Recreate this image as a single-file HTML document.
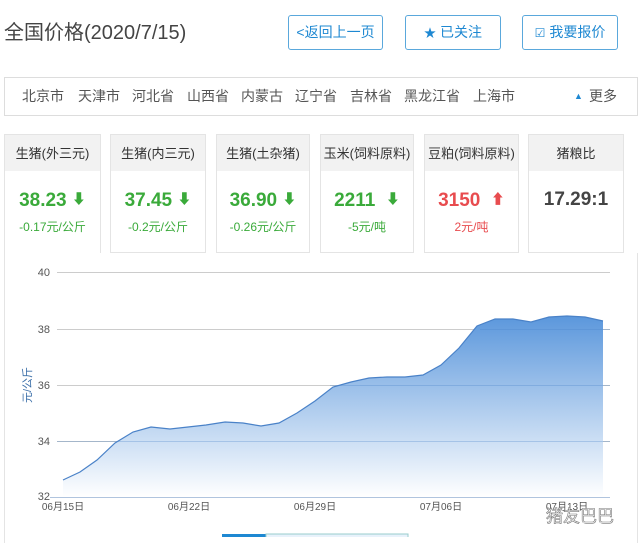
<!DOCTYPE html>
<html><head><meta charset="utf-8"><style>
*{margin:0;padding:0;box-sizing:border-box}
body{width:640px;height:537px;background:#fff;font-family:"Liberation Sans","Noto Sans CJK SC",sans-serif;position:relative;overflow:hidden;color:#333}
.abs{position:absolute}
.title{left:4px;top:16px;font-size:20px;color:#444}
.btn{top:15px;height:35px;border:1px solid #5aa8dc;border-radius:3px;color:#1e88d2;font-size:14px;line-height:33px;text-align:center}
.prov{left:4px;top:77px;width:634px;height:39px;border:1px solid #ddd;font-size:14px;color:#555;line-height:37px}
.prov span{position:absolute;top:0}
.card{top:134px;height:119px;border:1px solid #e4e4e4;text-align:center}
.card .h{height:36px;background:#f2f2f2;font-size:13px;line-height:38px;color:#333}
.card .v{font-size:19px;font-weight:bold;margin-top:18px}
.card .v i{font-style:normal;font-size:14px;vertical-align:2px}
.card .d{font-size:12px;margin-top:6px}
.g{color:#3aaa3a}.r{color:#e84c4f}
</style></head><body>
<div class="abs title">全国价格(2020/7/15)</div>
<div class="abs btn" style="left:288px;width:95px">&lt;返回上一页</div>
<div class="abs btn" style="left:405px;width:96px"><span style="font-size:12px">★</span> 已关注</div>
<div class="abs btn" style="left:522px;width:96px"><span style="font-size:12px">☑</span> 我要报价</div>
<div class="abs prov">
<span style="left:17px">北京市</span><span style="left:73px">天津市</span><span style="left:127px">河北省</span><span style="left:182px">山西省</span><span style="left:236px">内蒙古</span><span style="left:290px">辽宁省</span><span style="left:345px">吉林省</span><span style="left:399px">黑龙江省</span><span style="left:468px">上海市</span><span style="left:569px;font-size:9px;color:#1e88d2">▲</span><span style="left:584px">更多</span>
</div>
<div class="abs card" style="left:4px;width:97px;border-bottom:none"><div class="h">生猪(外三元)</div><div class="v g">38.23 <i>⬇</i></div><div class="d g">-0.17元/公斤</div></div>
<div class="abs card" style="left:110px;width:96px"><div class="h">生猪(内三元)</div><div class="v g">37.45 <i>⬇</i></div><div class="d g">-0.2元/公斤</div></div>
<div class="abs card" style="left:216px;width:94px"><div class="h">生猪(土杂猪)</div><div class="v g">36.90 <i>⬇</i></div><div class="d g">-0.26元/公斤</div></div>
<div class="abs card" style="left:320px;width:94px"><div class="h">玉米(饲料原料)</div><div class="v g">2211 &nbsp;<i>⬇</i></div><div class="d g">-5元/吨</div></div>
<div class="abs card" style="left:424px;width:95px"><div class="h">豆粕(饲料原料)</div><div class="v r">3150 &nbsp;<i>⬆</i></div><div class="d r">2元/吨</div></div>
<div class="abs card" style="left:528px;width:96px"><div class="h">猪粮比</div><div class="v" style="color:#444">17.29:1</div></div>
<div class="abs" style="left:4px;top:253px;width:634px;height:290px;border:1px solid #e4e4e4;border-bottom:none;border-top:none"></div>
<svg class="abs" style="left:0;top:0" width="640" height="537">
<defs><linearGradient id="gr" x1="0" y1="0" x2="0" y2="1"><stop offset="0" stop-color="#5b97dc"/><stop offset="1" stop-color="#fff"/></linearGradient></defs>
<g stroke="#ccc" stroke-width="1"><line x1="57" y1="272.5" x2="610" y2="272.5"/><line x1="57" y1="329.5" x2="610" y2="329.5"/><line x1="57" y1="385.5" x2="610" y2="385.5"/><line x1="57" y1="441.5" x2="610" y2="441.5"/></g>
<path d="M63,480 L80,472 L97,460 L115,443 L133,432 L151,427 L170,429 L188,427 L206,425 L225,422 L243,423 L261,426 L279,423 L297,413 L315,401 L333,387 L351,382 L369,378 L387,377 L405,377 L423,375 L441,365 L459,348 L477,326 L495,319 L513,319 L531,322 L549,317 L567,316 L585,317 L603,321 L603,497 L63,497Z" fill="url(#gr)"/>
<path d="M63,480 L80,472 L97,460 L115,443 L133,432 L151,427 L170,429 L188,427 L206,425 L225,422 L243,423 L261,426 L279,423 L297,413 L315,401 L333,387 L351,382 L369,378 L387,377 L405,377 L423,375 L441,365 L459,348 L477,326 L495,319 L513,319 L531,322 L549,317 L567,316 L585,317 L603,321" fill="none" stroke="#4a82c8" stroke-width="1.2"/>
<g stroke="#4a82c8" stroke-width="0.5" opacity="0.6"><line x1="57" y1="441.5" x2="610" y2="441.5"/><line x1="330" y1="385.5" x2="610" y2="385.5"/><line x1="480" y1="329.5" x2="610" y2="329.5"/></g>
<line x1="50" y1="497.5" x2="610" y2="497.5" stroke="#b0c4de"/>
<g font-size="11" fill="#555" text-anchor="end" font-family="Liberation Sans,sans-serif"><text x="50" y="276">40</text><text x="50" y="333">38</text><text x="50" y="389">36</text><text x="50" y="445">34</text><text x="50" y="500">32</text></g>
<text x="31" y="385" font-size="11" fill="#3a6ea8" transform="rotate(-90 31 385)" text-anchor="middle" font-family="Liberation Sans,Noto Sans CJK SC,sans-serif">元/公斤</text>
<g font-size="10" fill="#555" text-anchor="middle" font-family="Liberation Sans,Noto Sans CJK SC,sans-serif"><text x="63" y="510">06月15日</text><text x="189" y="510">06月22日</text><text x="315" y="510">06月29日</text><text x="441" y="510">07月06日</text><text x="567" y="510">07月13日</text></g>
<rect x="222" y="534" width="44" height="5" fill="#1e88d2"/><rect x="266" y="534" width="142" height="5" fill="#e8f2fb" stroke="#9cc"/>
<text x="546" y="522" font-size="17" fill="#fff" stroke="#777" stroke-width="0.6" font-family="Noto Sans CJK SC,sans-serif">猪友巴巴</text>
</svg>
</body></html>
